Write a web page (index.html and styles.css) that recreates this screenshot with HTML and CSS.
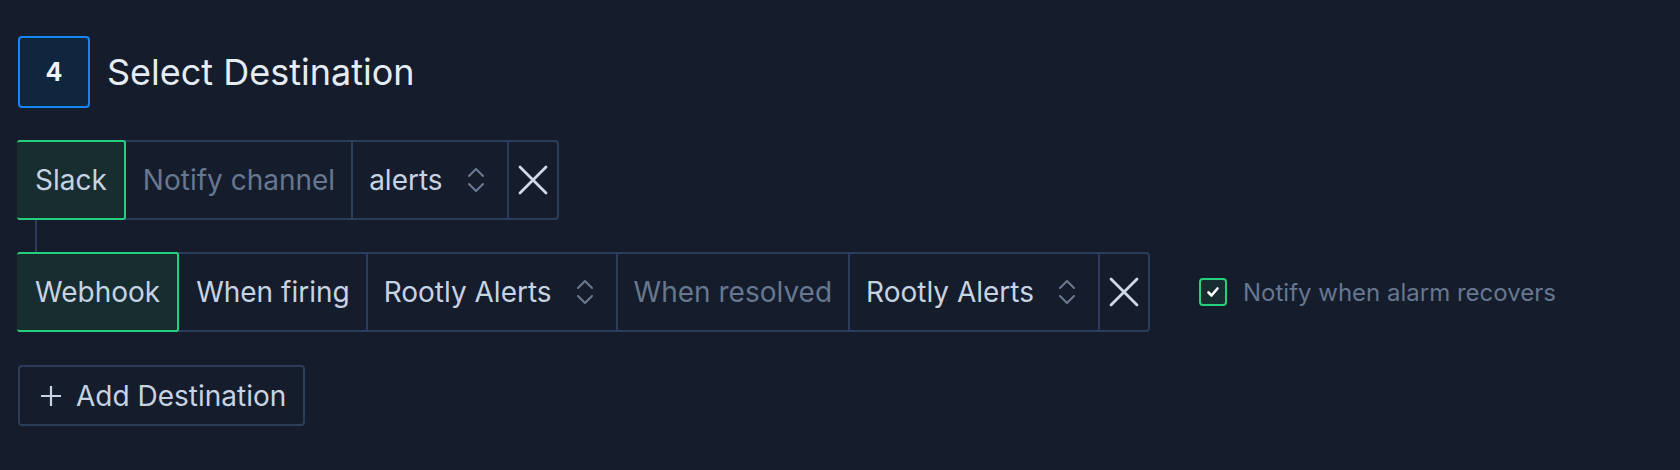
FILE: index.html
```html
<!DOCTYPE html>
<html>
<head>
<meta charset="utf-8">
<link rel="stylesheet" href="styles.css">
</head>
<body>
<div class="page">
  <div class="step-header">
    <div class="step-badge">4</div>
    <h2 class="step-title">Select Destination</h2>
  </div>

  <div class="destinations">
    <div class="dest-row">
      <div class="row-group">
        <div class="cell cell-type">Slack</div>
        <div class="cell cell-label muted">Notify channel</div>
        <div class="cell cell-select">
          <span>alerts</span>
          <svg class="chev" viewBox="0 0 18 30" width="18" height="30"><path d="M2 11 L9 4 L16 11 M2 19 L9 26 L16 19" fill="none" stroke="currentColor" stroke-width="2" stroke-linecap="round" stroke-linejoin="round"/></svg>
        </div>
        <div class="cell cell-remove">
          <svg viewBox="0 0 30 30" width="30" height="30"><path d="M2 2 L28 28 M28 2 L2 28" fill="none" stroke="currentColor" stroke-width="2.8" stroke-linecap="round"/></svg>
        </div>
      </div>
    </div>

    <div class="connector"></div>

    <div class="dest-row">
      <div class="row-group">
        <div class="cell cell-type">Webhook</div>
        <div class="cell cell-label">When firing</div>
        <div class="cell cell-select">
          <span>Rootly Alerts</span>
          <svg class="chev" viewBox="0 0 18 30" width="18" height="30"><path d="M2 11 L9 4 L16 11 M2 19 L9 26 L16 19" fill="none" stroke="currentColor" stroke-width="2" stroke-linecap="round" stroke-linejoin="round"/></svg>
        </div>
        <div class="cell cell-label muted">When resolved</div>
        <div class="cell cell-select">
          <span>Rootly Alerts</span>
          <svg class="chev" viewBox="0 0 18 30" width="18" height="30"><path d="M2 11 L9 4 L16 11 M2 19 L9 26 L16 19" fill="none" stroke="currentColor" stroke-width="2" stroke-linecap="round" stroke-linejoin="round"/></svg>
        </div>
        <div class="cell cell-remove">
          <svg viewBox="0 0 30 30" width="30" height="30"><path d="M2 2 L28 28 M28 2 L2 28" fill="none" stroke="currentColor" stroke-width="2.8" stroke-linecap="round"/></svg>
        </div>
      </div>
      <label class="recover">
        <span class="checkbox">
          <svg viewBox="0 0 14 14" width="14" height="14"><path d="M2.5 7.5 L5.5 10.5 L11.5 3.5" fill="none" stroke="#ffffff" stroke-width="2.6" stroke-linecap="round" stroke-linejoin="round"/></svg>
        </span>
        <span class="recover-text">Notify when alarm recovers</span>
      </label>
    </div>
  </div>

  <button class="add-btn">
    <svg viewBox="0 0 22 22" width="22" height="22"><path d="M11 1 V21 M1 11 H21" fill="none" stroke="currentColor" stroke-width="2.2"/></svg>
    <span>Add Destination</span>
  </button>
</div>
</body>
</html>
```

FILE: styles.css
```css
html, body {
  margin: 0;
  padding: 0;
  background: #151d2c;
}

body {
  font-family: Inter, "Noto Sans", "Liberation Sans", sans-serif;
  color: #c6d3e3;
  width: 1680px;
  height: 470px;
  overflow: hidden;
}

.page {
  padding: 36px 0 0 18px;
  display: flex;
  flex-direction: column;
  align-items: flex-start;
}

.step-header {
  display: flex;
  align-items: center;
  gap: 17px;
}

.step-badge {
  width: 68px;
  height: 68px;
  border: 2px solid #1786f5;
  border-radius: 4px;
  background: #10263f;
  color: #eef3f9;
  font-weight: 700;
  font-size: 25px;
  display: flex;
  align-items: center;
  justify-content: center;
}

.step-title {
  margin: 0;
  font-size: 36px;
  font-weight: 400;
  color: #e5ecf4;
  letter-spacing: 0;
}

.destinations {
  margin-top: 32px;
  display: flex;
  flex-direction: column;
  align-items: flex-start;
}

.dest-row {
  display: flex;
  align-items: center;
}

.row-group {
  display: flex;
  align-items: stretch;
  height: 76px;
  border: 2px solid #2b3d5d;
  border-radius: 4px;
  margin-left: -1px;
}

.cell {
  display: flex;
  align-items: center;
  padding: 0 16px;
  font-size: 28px;
  white-space: nowrap;
  border-left: 2px solid #2b3d5d;
}

.cell:first-child {
  border-left: none;
}

.cell-type {
  background: #172d30;
  border: 2px solid #26d17d;
  border-radius: 3px;
  margin: -2px 0 -2px -2px;
  padding: 0 17px 0 18px;
  color: #c6d3e3;
}

.cell-type + .cell {
  border-left: none;
  padding-left: 17px;
}

.muted {
  color: #67778f;
}

.cell-select {
  gap: 24px;
  padding-right: 22px;
}

.chev {
  color: #6b7a90;
  flex: none;
}

.cell-remove {
  padding: 0 9px;
  color: #cfdae6;
}

.connector {
  width: 2px;
  height: 32px;
  background: #2b3d5d;
  margin-left: 17px;
}

.recover {
  display: flex;
  align-items: center;
  gap: 16px;
  margin-left: 49px;
}

.checkbox {
  width: 24px;
  height: 24px;
  border: 2px solid #26d17d;
  border-radius: 4px;
  background: #172d30;
  display: flex;
  align-items: center;
  justify-content: center;
}

.recover-text {
  font-size: 24px;
  color: #67778f;
}

.add-btn {
  margin-top: 33px;
  height: 61px;
  padding: 0 17px 0 20px;
  display: flex;
  align-items: center;
  gap: 14px;
  background: transparent;
  border: 2px solid #2b3d5d;
  border-radius: 4px;
  font-family: inherit;
  font-size: 28px;
  color: #c6d3e3;
}
```
